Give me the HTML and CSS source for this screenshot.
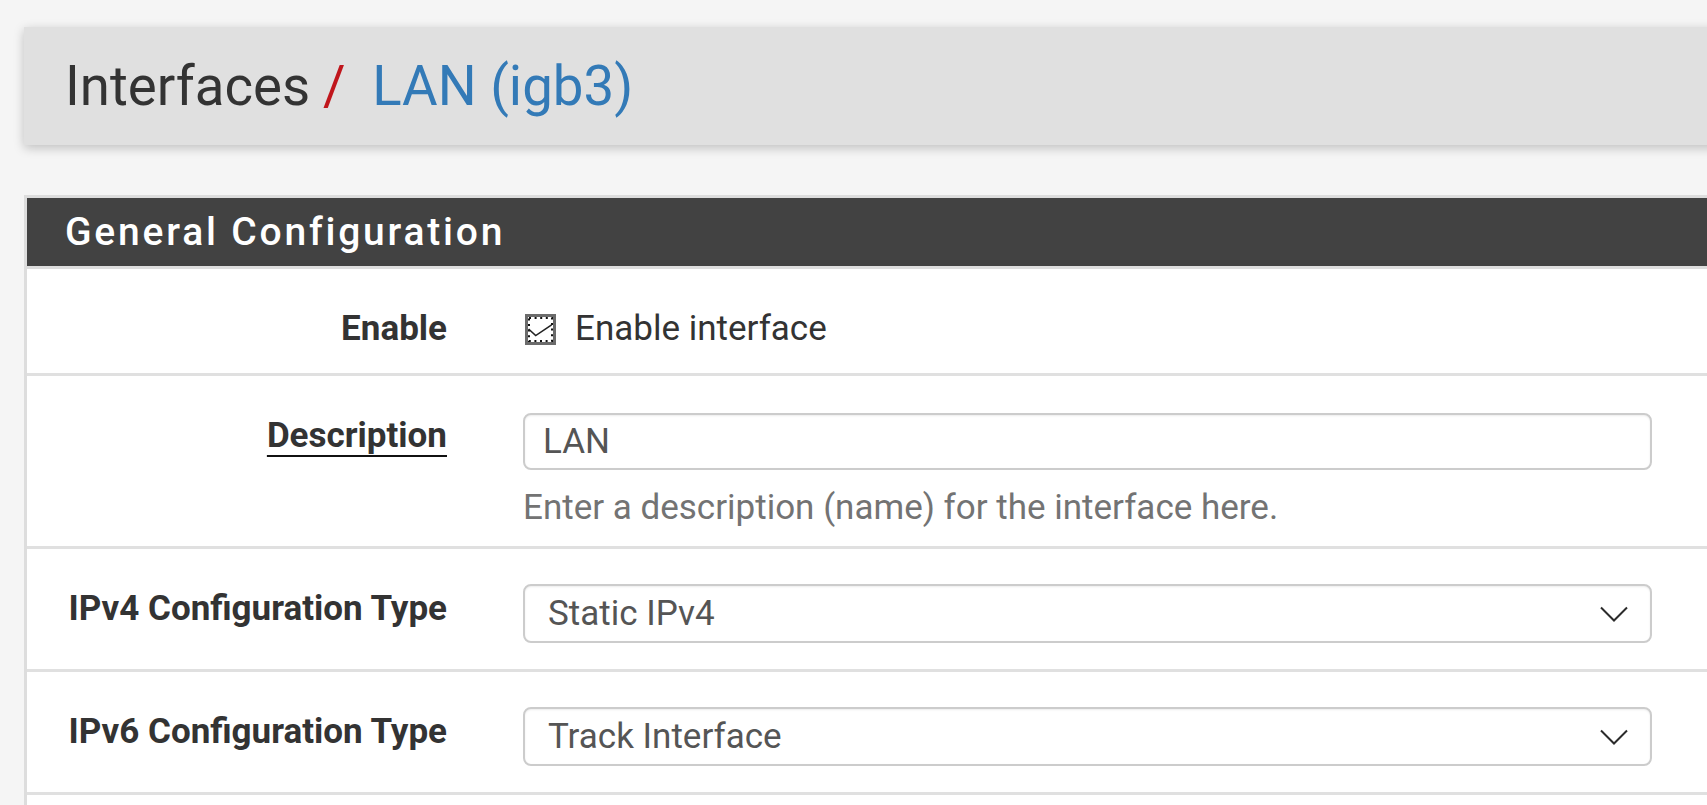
FILE: index.html
```html
<!DOCTYPE html>
<html lang="en">
<head>
<meta charset="utf-8">
<title>Interfaces / LAN (igb3)</title>
<link rel="stylesheet" href="styles.css">
</head>
<body>
<div class="page">
  <header class="page-header">
    <h1 class="breadcrumb">
      <span class="crumb">Interfaces</span><span class="sep">/&nbsp;</span><span class="crumb-active">LAN (igb3)</span>
    </h1>
  </header>

  <section class="panel">
    <h2 class="panel-heading">General Configuration</h2>
    <div class="panel-body">
      <div class="form-row row-check">
        <div class="form-label">Enable</div>
        <div class="form-field">
          <label class="check">
            <svg class="check-box" width="31" height="31" viewBox="0 0 31 31" aria-hidden="true">
              <rect x="1.5" y="1.5" width="28" height="28" fill="#fff" stroke="#6b6b6b" stroke-width="3"/>
              <rect x="4" y="4" width="23" height="23" fill="none" stroke="#111" stroke-width="2" stroke-dasharray="2 3.6"/>
              <polyline points="3.6,15 10.7,21.6 26.6,10.8" fill="none" stroke="#222" stroke-width="1.6"/>
            </svg>
            <span>Enable interface</span>
          </label>
        </div>
      </div>

      <div class="form-row row-help">
        <div class="form-label"><span class="label-link">Description</span></div>
        <div class="form-field">
          <input class="text-input" type="text" value="LAN">
          <div class="help">Enter a description (name) for the interface here.</div>
        </div>
      </div>

      <div class="form-row">
        <div class="form-label">IPv4 Configuration Type</div>
        <div class="form-field">
          <div class="select">
            <span>Static IPv4</span>
            <svg class="chevron" width="28" height="16" viewBox="0 0 28 16" aria-hidden="true">
              <polyline points="1,1.5 14,14.5 27,1.5" fill="none" stroke="#2b2b2b" stroke-width="2"/>
            </svg>
          </div>
        </div>
      </div>

      <div class="form-row">
        <div class="form-label">IPv6 Configuration Type</div>
        <div class="form-field">
          <div class="select">
            <span>Track Interface</span>
            <svg class="chevron" width="28" height="16" viewBox="0 0 28 16" aria-hidden="true">
              <polyline points="1,1.5 14,14.5 27,1.5" fill="none" stroke="#2b2b2b" stroke-width="2"/>
            </svg>
          </div>
        </div>
      </div>

      <div class="form-row row-empty"></div>
    </div>
  </section>
</div>
</body>
</html>
```

FILE: styles.css
```css
html, body {
  margin: 0;
  padding: 0;
}

body {
  background: #f5f5f5;
  font-family: Roboto, "Liberation Sans", sans-serif;
  color: #333;
  overflow: hidden;
}

.page {
  padding: 27px 0 0 24px;
}

.page-header {
  background: #e0e0e0;
  height: 118px;
  margin-right: -20px;
  display: flex;
  align-items: center;
  padding-left: 41px;
  box-shadow: 0 3px 10px rgba(0, 0, 0, 0.22);
}

.breadcrumb {
  margin: 0;
  font-size: 54.6px;
  font-weight: 400;
  line-height: 63px;
  white-space: nowrap;
}

.crumb {
  color: #333;
}

.sep {
  color: #c0161c;
  padding: 0 13px 0 13px;
}

.crumb-active {
  color: #337ab7;
}

.panel {
  margin-top: 50px;
  margin-right: -20px;
  border: 3px solid #dddddd;
  border-bottom: 0;
  background: #fff;
}

.panel-heading {
  margin: 0;
  background: #424242;
  color: #fff;
  height: 68px;
  border-bottom: 3px solid #dddddd;
  display: flex;
  align-items: center;
  padding-left: 38px;
  font-size: 39px;
  font-weight: 500;
  letter-spacing: 2.8px;
}

.form-row {
  display: grid;
  grid-template-columns: 420px 1fr;
  column-gap: 76px;
  padding: 35px 72px 26px 0;
  border-bottom: 3px solid #e0e0e0;
  font-size: 35px;
  line-height: 50px;
}

.row-check {
  padding-bottom: 19px;
}

.row-help {
  padding-bottom: 13px;
}

.row-empty {
  border-bottom: 0;
  height: 10px;
  padding: 0;
}

.form-label {
  text-align: right;
  font-weight: 700;
  color: #333;
  white-space: nowrap;
}

.label-link {
  text-decoration: underline;
  text-decoration-thickness: 2px;
  text-underline-offset: 8px;
  text-decoration-color: #111;
}

.form-field {
  min-width: 0;
}

.check {
  display: flex;
  align-items: center;
  height: 50px;
  gap: 19px;
  padding-left: 2px;
  color: #333;
}

.check-box {
  display: block;
  flex: none;
}

.text-input {
  display: block;
  box-sizing: border-box;
  width: 100%;
  height: 57px;
  margin: 2px 0 0 0;
  padding: 0 18px;
  border: 2px solid #cccccc;
  border-radius: 8px;
  box-shadow: inset 0 1px 2px rgba(0, 0, 0, 0.075);
  font-family: Roboto, "Liberation Sans", sans-serif;
  font-size: 35px;
  color: #555;
  background: #fff;
  outline: none;
}

.help {
  margin-top: 13px;
  color: #737373;
  white-space: nowrap;
}

.select {
  box-sizing: border-box;
  height: 59px;
  border: 2px solid #cccccc;
  border-radius: 8px;
  box-shadow: inset 0 1px 2px rgba(0, 0, 0, 0.075);
  display: flex;
  align-items: center;
  justify-content: space-between;
  padding: 0 22px 0 23px;
  color: #555;
  background: #fff;
}

.chevron {
  display: block;
  flex: none;
}
```
